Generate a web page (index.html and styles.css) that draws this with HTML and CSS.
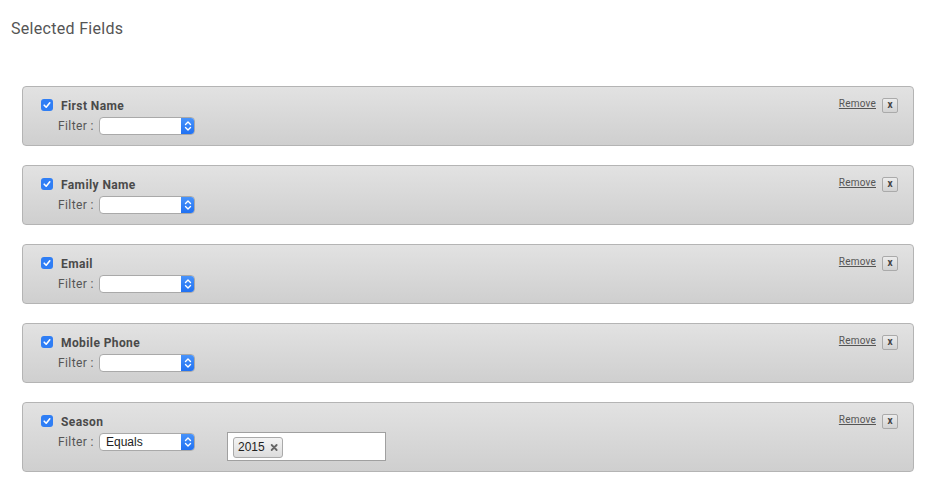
FILE: index.html
```html
<!DOCTYPE html>
<html>
<head>
<meta charset="utf-8">
<link rel="stylesheet" href="styles.css">
</head>
<body>
<h1 class="title">Selected Fields</h1>
<div class="fields">
  <div class="panel">
    <div class="left">
      <label class="head"><span class="check"><svg viewBox="0 0 12 12" width="12" height="12"><path d="M3.2 6.2 L5.2 8.2 L8.8 3.8" fill="none" stroke="#fff" stroke-width="1.6" stroke-linecap="round" stroke-linejoin="round"/></svg></span><span class="name">First Name</span></label>
      <div class="filter"><span class="flabel">Filter :</span><div class="select"><span class="val"></span><span class="arrow"><svg viewBox="0 0 14 18" width="14" height="18"><path d="M4.5 7.5 L7 5 L9.5 7.5 M4.5 10.5 L7 13 L9.5 10.5" fill="none" stroke="#fff" stroke-width="1.4" stroke-linecap="round" stroke-linejoin="round"/></svg></span></div></div>
    </div>
    <div class="right"><a class="remove" href="#">Remove</a><span class="xbtn">x</span></div>
  </div>
  <div class="panel">
    <div class="left">
      <label class="head"><span class="check"><svg viewBox="0 0 12 12" width="12" height="12"><path d="M3.2 6.2 L5.2 8.2 L8.8 3.8" fill="none" stroke="#fff" stroke-width="1.6" stroke-linecap="round" stroke-linejoin="round"/></svg></span><span class="name">Family Name</span></label>
      <div class="filter"><span class="flabel">Filter :</span><div class="select"><span class="val"></span><span class="arrow"><svg viewBox="0 0 14 18" width="14" height="18"><path d="M4.5 7.5 L7 5 L9.5 7.5 M4.5 10.5 L7 13 L9.5 10.5" fill="none" stroke="#fff" stroke-width="1.4" stroke-linecap="round" stroke-linejoin="round"/></svg></span></div></div>
    </div>
    <div class="right"><a class="remove" href="#">Remove</a><span class="xbtn">x</span></div>
  </div>
  <div class="panel">
    <div class="left">
      <label class="head"><span class="check"><svg viewBox="0 0 12 12" width="12" height="12"><path d="M3.2 6.2 L5.2 8.2 L8.8 3.8" fill="none" stroke="#fff" stroke-width="1.6" stroke-linecap="round" stroke-linejoin="round"/></svg></span><span class="name">Email</span></label>
      <div class="filter"><span class="flabel">Filter :</span><div class="select"><span class="val"></span><span class="arrow"><svg viewBox="0 0 14 18" width="14" height="18"><path d="M4.5 7.5 L7 5 L9.5 7.5 M4.5 10.5 L7 13 L9.5 10.5" fill="none" stroke="#fff" stroke-width="1.4" stroke-linecap="round" stroke-linejoin="round"/></svg></span></div></div>
    </div>
    <div class="right"><a class="remove" href="#">Remove</a><span class="xbtn">x</span></div>
  </div>
  <div class="panel">
    <div class="left">
      <label class="head"><span class="check"><svg viewBox="0 0 12 12" width="12" height="12"><path d="M3.2 6.2 L5.2 8.2 L8.8 3.8" fill="none" stroke="#fff" stroke-width="1.6" stroke-linecap="round" stroke-linejoin="round"/></svg></span><span class="name">Mobile Phone</span></label>
      <div class="filter"><span class="flabel">Filter :</span><div class="select"><span class="val"></span><span class="arrow"><svg viewBox="0 0 14 18" width="14" height="18"><path d="M4.5 7.5 L7 5 L9.5 7.5 M4.5 10.5 L7 13 L9.5 10.5" fill="none" stroke="#fff" stroke-width="1.4" stroke-linecap="round" stroke-linejoin="round"/></svg></span></div></div>
    </div>
    <div class="right"><a class="remove" href="#">Remove</a><span class="xbtn">x</span></div>
  </div>
  <div class="panel tall">
    <div class="left">
      <label class="head"><span class="check"><svg viewBox="0 0 12 12" width="12" height="12"><path d="M3.2 6.2 L5.2 8.2 L8.8 3.8" fill="none" stroke="#fff" stroke-width="1.6" stroke-linecap="round" stroke-linejoin="round"/></svg></span><span class="name">Season</span></label>
      <div class="filter"><span class="flabel">Filter :</span><div class="select"><span class="val">Equals</span><span class="arrow"><svg viewBox="0 0 14 18" width="14" height="18"><path d="M4.5 7.5 L7 5 L9.5 7.5 M4.5 10.5 L7 13 L9.5 10.5" fill="none" stroke="#fff" stroke-width="1.4" stroke-linecap="round" stroke-linejoin="round"/></svg></span></div>
        <div class="tagbox"><span class="tag">2015<svg viewBox="0 0 10 10" width="9" height="9"><path d="M2 2 L8 8 M8 2 L2 8" stroke="#666" stroke-width="2.2" stroke-linecap="round"/></svg></span></div>
      </div>
    </div>
    <div class="right"><a class="remove" href="#">Remove</a><span class="xbtn">x</span></div>
  </div>
</div>
</body>
</html>
```
FILE: styles.css
```css
html, body { margin: 0; padding: 0; background: #fff; }
body { font-family: Roboto, "Liberation Sans", sans-serif; color: #444; }
.title {
  margin: 0;
  padding: 19px 0 0 11px;
  font-size: 16px;
  font-weight: 400;
  line-height: 20px;
  letter-spacing: 0.3px;
  color: #555;
}
.fields {
  display: flex;
  flex-direction: column;
  gap: 19px;
  padding: 47px 13px 0 22px;
}
.panel {
  box-sizing: border-box;
  height: 60px;
  border: 1px solid #b4b4b4;
  border-radius: 4px;
  background: linear-gradient(#e2e2e2, #cfcfcf);
  display: flex;
  justify-content: space-between;
  padding: 10px 15px 0 18px;
}
.panel.tall { height: 70px; }
.head { display: flex; align-items: center; height: 18px; margin-top: -1px; }
.check {
  width: 12px; height: 12px;
  background: #2f7ef5;
  border-radius: 3px;
  display: flex;
}
.name {
  margin-left: 8px;
  margin-top: 1px;
  font-size: 12px;
  font-weight: 700;
  letter-spacing: 0.4px;
  color: #4a4a4a;
}
.filter { display: flex; align-items: flex-start; margin-top: 3px; }
.flabel {
  margin-left: 17px;
  width: 41px;
  font-size: 12px;
  line-height: 18px;
  letter-spacing: 0.4px;
  color: #555;
}
.select {
  box-sizing: border-box;
  width: 96px; height: 18px;
  border: 1px solid #a9a9a9;
  border-radius: 4px;
  background: #fff;
  display: flex;
  overflow: hidden;
}
.val {
  flex: 1;
  font-family: "Liberation Sans", Arial, sans-serif;
  font-size: 12px;
  line-height: 16px;
  padding-left: 6px;
  color: #222;
}
.arrow {
  width: 14px;
  margin: -1px -1px -1px 0;
  background: linear-gradient(#4a95fb, #1e6ff2);
  display: flex;
}
.tagbox {
  box-sizing: border-box;
  margin-left: 32px;
  margin-top: -1px;
  width: 159px; height: 29px;
  border: 1px solid #a0a0a0;
  background: #fff;
  padding: 3px 0 0 5px;
}
.tag {
  box-sizing: border-box;
  display: inline-flex;
  align-items: center;
  gap: 5px;
  width: 50px;
  height: 21px;
  padding: 0 4px 0 4px;
  border: 1px solid #aaa;
  border-radius: 3px;
  background: linear-gradient(#f4f4f4, #dcdcdc);
  font-family: "Liberation Sans", Arial, sans-serif;
  font-size: 12px;
  color: #222;
}
.right { display: flex; align-items: flex-start; gap: 6px; padding-top: 0; }
.remove {
  font-size: 10px;
  color: #555;
  line-height: 13px;
  letter-spacing: 0.2px;
  text-decoration: underline;
}
.xbtn {
  box-sizing: border-box;
  width: 16px; height: 15px;
  margin-top: 1px;
  border: 1px solid #aaa;
  border-radius: 2px;
  background: linear-gradient(#ececec, #d2d2d2);
  font-size: 10px;
  font-weight: 700;
  line-height: 12px;
  text-align: center;
  color: #444;
}
```
